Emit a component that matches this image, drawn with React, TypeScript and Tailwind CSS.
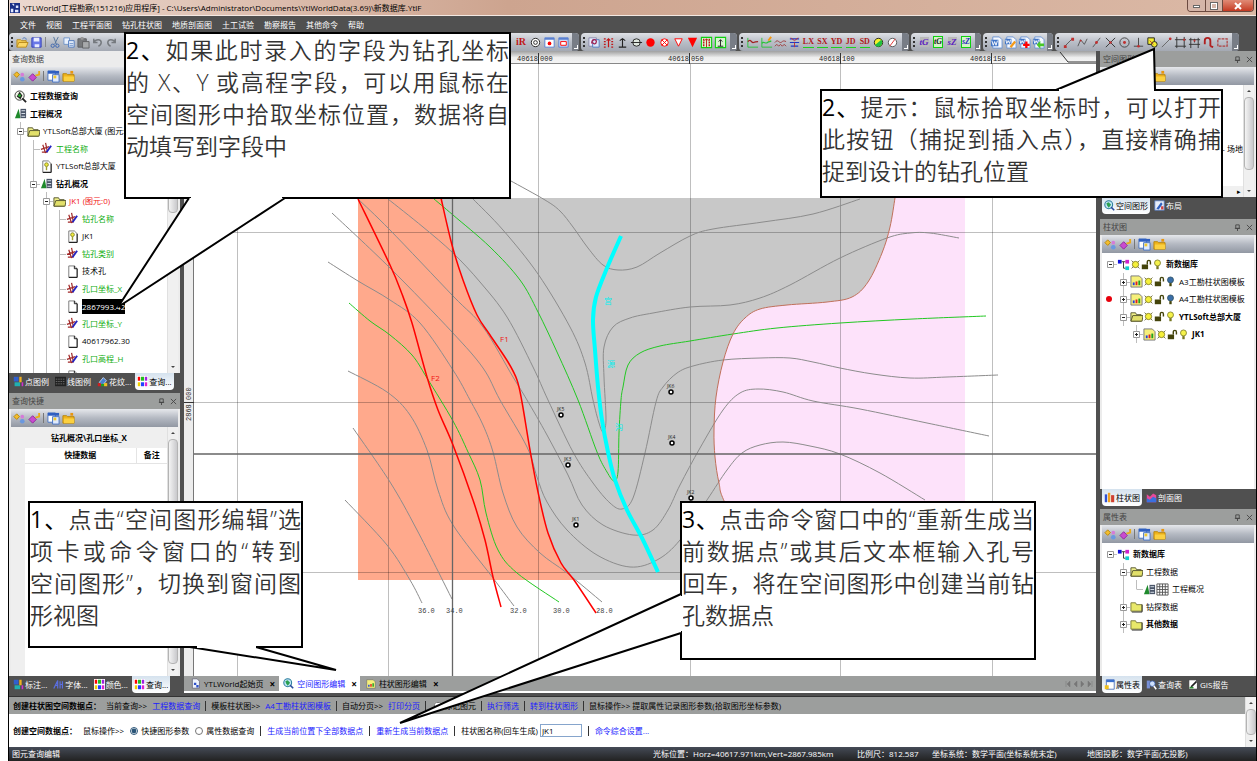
import { ReactNode } from "react";
import clsx from "clsx";

type Pt = [number, number];

// Catmull-Rom spline through the given points
const curve = (pts: Pt[], start = "M") => {
    let d = `${start}${pts[0][0]} ${pts[0][1]}`;
    for (let i = 0; i < pts.length - 1; i++) {
        const a = pts[i - 1] || pts[i];
        const b = pts[i];
        const c = pts[i + 1];
        const e = pts[i + 2] || c;
        d += `C${b[0] + (c[0] - a[0]) / 6} ${b[1] + (c[1] - a[1]) / 6} ${c[0] - (e[0] - b[0]) / 6} ${c[1] - (e[1] - b[1]) / 6} ${c[0]} ${c[1]}`;
    }
    return d;
};

/* ---------- map data ---------- */

const faultTop: Pt[] = [[441, 198], [452, 245], [463, 280], [477, 315], [490, 335], [508, 362], [517, 380], [522, 402], [530, 450], [538, 492], [548, 533], [561, 563], [574, 580]];
const fault1: Pt[] = [...faultTop, [596, 613]];
const fault2: Pt[] = [[358, 199], [390, 265], [402, 294], [412, 323], [427, 377], [438, 410], [453, 445], [473, 500], [485, 540], [493, 577], [501, 607]];
const pinkEdge: Pt[] = [[895, 198], [890, 227], [882, 253], [868, 282], [852, 297], [827, 302], [787, 305], [760, 309], [745, 318], [733, 334], [723, 362], [716, 397], [714, 430], [715, 457], [719, 483], [726, 505], [765, 580]];
const river: Pt[] = [[621, 236], [607, 268], [596, 297], [593, 320], [595, 350], [598, 387], [602, 420], [608, 452], [615, 480], [627, 510], [642, 538], [658, 572]];

const greenLines: Pt[][] = [
    [[434, 199], [453, 215], [490, 247], [520, 280], [538, 312], [557, 352], [578, 400], [597, 452], [607, 472], [614, 481], [618, 472], [619, 433], [621, 400], [623, 387], [628, 365], [640, 353], [660, 346], [690, 341], [733, 334], [777, 328], [840, 323], [913, 319], [986, 316]],
    [[349, 303], [370, 321], [390, 335], [412, 355], [427, 378], [453, 421], [468, 452], [480, 480], [486, 513], [498, 550], [517, 573], [559, 602]],
];

const grayLines: Pt[][] = [
    [[511, 181], [545, 200], [560, 211], [573, 227], [588, 248], [603, 265], [618, 270], [637, 267], [660, 253], [690, 236], [713, 229], [763, 222], [813, 214], [860, 199]],
    [[473, 199], [503, 230], [538, 274], [570, 327], [585, 363], [593, 400], [599, 423], [603, 432], [606, 420], [604, 377], [604, 347], [613, 327], [630, 318], [653, 313], [690, 307], [730, 305], [760, 298], [790, 285], [840, 258], [887, 238], [910, 233], [930, 233], [959, 238]],
    [[388, 199], [423, 227], [453, 253], [480, 282], [507, 317], [533, 367], [548, 400], [573, 452], [593, 483], [610, 503], [622, 509], [633, 498], [645, 453], [656, 402], [663, 387], [677, 373], [693, 366], [723, 360], [760, 358], [790, 358], [813, 362], [840, 368], [873, 374], [910, 378], [947, 377], [998, 375]],
    [[358, 199], [390, 230], [453, 296], [483, 327], [513, 377], [527, 400], [547, 435], [568, 475], [582, 505], [603, 525], [633, 535], [653, 530], [668, 510], [680, 485], [700, 448], [723, 410], [740, 393], [758, 389], [783, 392], [813, 401], [860, 409], [927, 423], [989, 436]],
    [[332, 213], [390, 268], [452, 332], [483, 368], [500, 400], [527, 447], [537, 477], [547, 502], [567, 530], [597, 555], [630, 567], [657, 560], [680, 540], [707, 500], [727, 470], [742, 453], [760, 445], [783, 442], [810, 446], [840, 454], [880, 473], [925, 500]],
    [[328, 262], [358, 281], [390, 300], [420, 323], [453, 370], [470, 400], [483, 425], [493, 452], [503, 493], [517, 527], [540, 553], [567, 573], [602, 602]],
    [[348, 371], [387, 392], [410, 415], [427, 450], [438, 490], [453, 525], [493, 578], [514, 606]],
    [[353, 428], [390, 482], [417, 530], [452, 599]],
    [[345, 500], [387, 545], [410, 580], [422, 603]],
];

const drills: [number, number, string][] = [[671, 392, "JK6"], [561, 415, "JK5"], [672, 443, "JK4"], [568, 465, "JK3"], [691, 498, "JK2"], [576, 525, "JK1"]];
const levels: [number, string][] = [[418, "36.0"], [446, "34.0"], [510, "32.0"], [553, "30.0"], [596, "28.0"]];
const gridX = [237, 388, 538, 690, 840, 992];
const gridY = [232, 402, 572];

/* ---------- icons, all on a 14 x 14 grid ---------- */

const icons: Record<string, ReactNode> = {
    folder: <><path d="M1 12V4h4l1 1h5v2" fill="#f3c94e" stroke="#b98a1c" /><path d="M1 12l2-5h10l-2 5z" fill="#fbd766" stroke="#b98a1c" /><path d="M7 3c2-2 4-1 4 1" fill="none" stroke="#4b74b8" /></>,
    save: <><path d="M2 2h10v10H2z" fill="#6a78e8" stroke="#3440b8" /><path d="M4 2h6v4H4zM5 9h5v3H5z" fill="#e9ecff" /></>,
    cut: <><path d="M5 1l3 8M10 1L6 9" stroke="#56779e" fill="none" /><circle cx="4" cy="10.500" r="1.800" fill="none" stroke="#3d67b1" /><circle cx="9" cy="10.500" r="1.800" fill="none" stroke="#3d67b1" /></>,
    copy: <><path d="M1 2h6v7H1z" fill="#e8f0fc" stroke="#6f93c8" /><path d="M6 5h6v7H6z" fill="#e8f0fc" stroke="#4f7ac0" /><path d="M7 8h4M7 10h4" stroke="#6f93c8" /></>,
    paste: <><path d="M1 3h9v9H1z" fill="#77797c" stroke="#5c5e61" /><path d="M4 1h3v3H4z" fill="#999" /><path d="M6 6h7v7H6z" fill="#a7a9ab" stroke="#606163" /></>,
    undo: <path d="M3 3v4h4M3 7c2-4 8-4 8 0 0 2-1 3-3 4" fill="none" stroke="#75797e" strokeWidth="1.600" />,
    redo: <path d="M11 3v4H7M11 7C9 3 3 3 3 7c0 2 1 3 3 4" fill="none" stroke="#75797e" strokeWidth="1.600" />,
    ring: <><circle cx="7" cy="7" r="4.500" fill="#fff" stroke="#222" /><circle cx="7" cy="7" r="2" fill="none" stroke="#222" /></>,
    winDot: <><path d="M2 2h10v10H2z" fill="#fff" stroke="#5a80d0" /><path d="M2 2h10v2H2z" fill="#5a80d0" /><circle cx="7" cy="8" r="2" fill="red" /></>,
    winBox: <><path d="M2 2h10v10H2z" fill="#cfdcf5" stroke="#5a80d0" /><path d="M2 2h10v2H2z" fill="#5a80d0" /><path d="M4 6h6v4H4z" fill="#fff" stroke="red" /></>,
    pageClip: <><path d="M1 2h8v9H1z" fill="#eef" stroke="#88a" /><path d="M5 4h7v8H5z" fill="#dbe8fa" stroke="#4f7ac0" /><path d="M4 8c0-5 5-5 5-2s-3 3-4 1" fill="none" stroke="#a02050" strokeWidth="1.400" /></>,
    bars: <path d="M2 3h2M2 6h2M2 9h2M2 12h2M10 3h2M10 6h2M10 9h2M10 12h2M7 12V3M5 5l2-2 2 2" fill="none" stroke="#c01818" strokeWidth="1.300" />,
    up: <path d="M7 12V3M4 5l3-2 3 2M3 12h8" fill="none" stroke="#222" strokeWidth="1.200" />,
    circleLine: <><circle cx="7" cy="7" r="4" fill="#dfe8df" stroke="#222" /><path d="M1 7h12" stroke="#222" /></>,
    redDot: <circle cx="7" cy="7" r="4.500" fill="red" />,
    redHatch: <><circle cx="7" cy="7" r="4" fill="#fff" stroke="red" /><path d="M4 4l6 6M10 4l-6 6" stroke="red" /></>,
    triOpen: <path d="M3 3h8L7 11z" fill="#fff" stroke="red" />,
    tri: <path d="M2 2h10L7 12z" fill="red" />,
    barsGreen: <><path d="M1.500 1.500h11v11h-11z" fill="#d8f5d0" stroke="#10d010" strokeWidth="1.200" /><path d="M4 3v9M10 3v9" stroke="#c01818" strokeWidth="1.500" strokeDasharray="2 1" /><path d="M7 12V3M5 5l2-2 2 2" fill="none" stroke="#c01818" /></>,
    upGreen: <><path d="M1.500 1.500h11v11h-11z" fill="#d8f5d0" stroke="#10d010" strokeWidth="1.200" /><path d="M7 11V4M5 6l2-2 2 2M4 11h6" fill="none" stroke="#222" /></>,
    wave: <><path d="M2 2v10h11" fill="none" stroke="#2ac43a" /><path d="M2 6c3-4 4 2 6 1s3-1 5-1" fill="none" stroke="#a02020" strokeWidth="1.400" /></>,
    wavePen: <><path d="M2 2v10h11" fill="none" stroke="#2ac43a" /><path d="M2 8c2-3 4 1 6-1s3 0 4-2" fill="none" stroke="#2ac43a" strokeWidth="1.300" /><path d="M9 5l3-4" stroke="#f59a10" strokeWidth="2" /></>,
    waves: <path d="M1 7c3-4 4 0 6 0s2-3 6-1M1 11l2-2 2 2 2-2 2 2 2-2 2 2" fill="none" stroke="#a03838" />,
    blueBars: <><path d="M2 3h10M2 7h10M3 11h8" stroke="#2038c8" strokeWidth="1.300" /><path d="M3 2l4 3 4-3M7 7v5" stroke="#c03030" fill="none" /></>,
    pie: <><circle cx="7" cy="7" r="4.500" fill="#f7f02c" stroke="#222" /><path d="M3 10a4.500 4.500 0 0 0 7-6z" fill="#20c040" /></>,
    pieOpen: <><circle cx="7" cy="7" r="4.500" fill="#fff" stroke="#555" /><path d="M4 11l6-8" stroke="#e03030" /></>,
    word: <><path d="M3 1h7l3 3v9H3z" fill="#f5f9ff" stroke="#6c95d5" /><path d="M1 4h8v7H1z" fill="#3f74c6" /><path d="M2 5l1.500 5L5 6l1.500 4L8 5" fill="none" stroke="#fff" /></>,
    wordPen: <><path d="M3 1h7l3 3v9H3z" fill="#f5f9ff" stroke="#6c95d5" /><path d="M1 3h7v6H1z" fill="#3f74c6" /><path d="M2 4l1 4 1.500-3L6 8l1-4" fill="none" stroke="#fff" /><path d="M7 12l5-6" stroke="#f39a19" strokeWidth="2.500" /></>,
    wordRed: <><path d="M3 1h7l3 3v9H3z" fill="#f5f9ff" stroke="#6c95d5" /><path d="M1 3h7v6H1z" fill="#3f74c6" /><path d="M2 4l1 4 1.500-3L6 8l1-4" fill="none" stroke="#fff" /><path d="M9 6v7M5.500 9.500h7" stroke="red" strokeWidth="2.500" /></>,
    wordGreen: <><path d="M3 1h7l3 3v9H3z" fill="#f5f9ff" stroke="#6c95d5" /><path d="M1 3h7v6H1z" fill="#3f74c6" /><path d="M2 4l1 4 1.500-3L6 8l1-4" fill="none" stroke="#fff" /><path d="M9 5v3h4v3H9v3L5 9.500z" fill="#48c828" /></>,
    line: <><path d="M3 11l8-8" stroke="#555" /><path d="M2 10h3v3H2zM10 2h3v3h-3z" fill="#c03030" /></>,
    zig: <><path d="M2 11l3-7 4 5 3-6" fill="none" stroke="#555" /><circle cx="5" cy="5" r="1" fill="#c03030" /></>,
    slash: <><path d="M3 12l8-10" stroke="#555" /><circle cx="7" cy="7" r="1.500" fill="#c03030" /></>,
    cross: <><path d="M2 2l10 10M12 2L2 12" stroke="#333" /><circle cx="7" cy="7" r="1.300" fill="#c03030" /></>,
    target: <><circle cx="7" cy="7" r="5" fill="none" stroke="#444" /><circle cx="7" cy="7" r="1.600" fill="#c03030" /></>,
    perp: <><path d="M2 11h10M7 2v9" stroke="#444" /><circle cx="7" cy="11" r="1.400" fill="#c03030" /></>,
    insert: <><path d="M2 2h7v7H2z" fill="#f2ee30" stroke="#222" /><circle cx="9" cy="9" r="3" fill="#f2ee30" stroke="#222" /><path d="M4 5l4 4" stroke="#c03030" /></>,
    tangent: <><path d="M2 12L11 3" stroke="#666" /><circle cx="11" cy="3" r="1.500" fill="#c03030" /></>,
    frame: <><path d="M3 1v12M11 1v12M1 4h12M1 11h12" stroke="#333" /><path d="M10 3h2v2h-2z" fill="#c03030" /></>,
    frameUp: <><path d="M3 2v11M11 2v11M1 4h12M7 3v4M1 9h12" stroke="#333" /><path d="M6 4h2v2H6z" fill="#c03030" /></>,
    magnet: <path d="M3 9V5c0-4 6-4 6 0v6M9 11l3 1" fill="none" stroke="#b02020" strokeWidth="2" />,
    region: <path d="M2 3h10v8H2z" fill="none" stroke="#b04040" strokeDasharray="3 1" strokeWidth="1.300" />,
    gems: <><path d="M4 2l3 3-3 3-3-3z" fill="#f3bd2c" stroke="#b8860b" /><circle cx="10" cy="5" r="2" fill="#d57bd8" /><circle cx="10" cy="10" r="2.500" fill="#6a98e0" /></>,
    gemArrow: <><path d="M5 4l4 4-4 4-4-4z" fill="#c94bd0" stroke="#8e2c98" /><path d="M8 6l4-1V1" fill="none" stroke="#e8ab1a" strokeWidth="2" /></>,
    props: <><path d="M1 1h8v10H1z" fill="#fff" stroke="#4572c4" /><path d="M1 1h12v3H1z" fill="#2f5fc0" /><path d="M6 5h7v8H6z" fill="#dfeafc" stroke="#4572c4" /><path d="M7 6h3v3H7z" fill="#f0c930" /></>,
    folderNew: <><path d="M1 4h4l1 1h7v7H1z" fill="#f0b41c" stroke="#b8860b" /><path d="M2 7h11v5H2z" fill="#fbd040" /><path d="M9 1h3v3H9z" fill="#e89610" /></>,
    search: <><circle cx="6" cy="6" r="5" fill="#f0f5e8" stroke="#333" /><path d="M6 2l3 4-2 4-4-3z" fill="#222" /><circle cx="6" cy="6" r="1.500" fill="#25b02c" /><path d="M9 9l4 4" stroke="#222" strokeWidth="2" /></>,
    tree: <><path d="M5 2L1 12h6z" fill="#1f8a2c" /><path d="M7 2h6v10H7z" fill="#4a5568" /><path d="M8 4h4M8 7h4M8 10h4" stroke="#dfe6f0" /></>,
    folderOpen: <><path d="M1 12V3h5l1 2h5v7z" fill="#f0f08a" stroke="#555530" /><path d="M1 12l2-6h11l-1 6z" fill="#e2e06a" stroke="#555530" /></>,
    folderShut: <><path d="M1 12V3h5l1 2h6v7z" fill="#e8e86a" stroke="#77773a" /><path d="M13 5v8H2" stroke="#333" fill="none" /></>,
    pencil: <><path d="M3 3l3 9M6 1l2 10M1 8l9-3M2 11l6 0" stroke="#a02828" strokeWidth="1.300" fill="none" /><path d="M7 11l5-7" stroke="#2424c0" strokeWidth="2" /></>,
    page: <><path d="M3 1h6l3 3v9H3z" fill="#fff" stroke="#777" /><path d="M12 4v9.500H3M9 1v3h3" fill="none" stroke="#111" /></>,
    pageKey: <><path d="M3 1h6l3 3v9H3z" fill="#fff" stroke="#777" /><path d="M12 4v9.500H3" fill="none" stroke="#111" /><circle cx="7" cy="5" r="2" fill="#f0ea3a" stroke="#888830" /><path d="M7 7v4" stroke="#a0a030" strokeWidth="1.500" /></>,
    db: <><path d="M1 2h4v4H1z" fill="#1010e0" /><path d="M9 2h4v4H9z" fill="#d020d0" /><path d="M9 9h4v4H9z" fill="#10d0d0" /><path d="M5 4h4M7 4v7h2" stroke="#333" fill="none" /></>,
    sheet: <><path d="M1 1h9l3 3v9H1z" fill="#f6f07a" stroke="#777" /><path d="M4 11V8" stroke="#2040e0" strokeWidth="2" /><path d="M7 11V7" stroke="#e02020" strokeWidth="2" /><path d="M10 11V6" stroke="#20a020" strokeWidth="2" /></>,
    sun: <><path d="M2 2l10 10M12 2L2 12" stroke="#555520" /><circle cx="7" cy="7" r="4" fill="#f5f03a" stroke="#77701a" /></>,
    lock: <><path d="M1 7h8v6H1z" fill="#44440c" /><path d="M8 7V4c0-3 4-3 4 0v3" fill="none" stroke="#44440c" strokeWidth="1.800" /></>,
    bulb: <><circle cx="7" cy="5" r="3.800" fill="#f5f24a" stroke="#777722" /><path d="M5.500 9h3v4h-3z" fill="#777722" /></>,
    bulbBlue: <><circle cx="7" cy="5" r="3.800" fill="#3a6ea8" stroke="#2c4f60" /><path d="M5.500 9h3v4h-3z" fill="#44440c" /></>,
    grid: <path d="M1 1h12v12H1zM4 1v12M7 1v12M10 1v12M1 4h12M1 7h12M1 10h12" fill="#fff" stroke="#555" />,
    blocks: <><path d="M1 1h6v6H1z" fill="#3060d0" /><path d="M2 8h7v5H2z" fill="#20b0b0" /><path d="M8 1h3v7H8z" fill="#f0b020" /><path d="M11 8h2v5h-2z" fill="#d030d0" /></>,
    lines: <><path d="M0 1h14v12H0z" fill="#222" /><path d="M1 4h12M1 7h12M1 10h12" stroke="#777" strokeDasharray="2 1" /></>,
    pattern: <><path d="M3 8l5-6 4 4-5 6z" fill="#4a80d0" stroke="#d8e6f8" /><path d="M1 9h4v4H1z" fill="#d02020" /><path d="M5 10h4v3H5z" fill="#20a020" /><path d="M9 9h4v4H9z" fill="#f0c020" /></>,
    palette: <><path d="M0 0h14v14H0z" fill="#fff" /><path d="M1 1h3v5H1z" fill="red" /><path d="M5 1h4v5H5z" fill="#20c020" /><path d="M10 1h3v5h-3z" fill="#a020e0" /><path d="M1 8h3v5H1z" fill="#f0d000" /><path d="M5 8h4v5H5z" fill="#2040ff" /><path d="M10 8h3v5h-3z" fill="#e020d0" /></>,
    fontA: <path d="M1 12L6 2v10M3 8h3M9 3v9M12 3v9M9 7h3" fill="none" stroke="#5a6ee0" strokeWidth="1.500" />,
    globe: <><circle cx="6" cy="6" r="5" fill="#bfe4f5" stroke="#2a7c9c" strokeWidth="1.300" /><path d="M3 4l3-1 3 3-3 4-2-3z" fill="#2ba050" /><path d="M9 9l4 4" stroke="#2a4c9c" strokeWidth="2" /></>,
    layout: <><path d="M1 1h12v12H1z" fill="#e8eefa" stroke="#5278c0" /><path d="M3 11l6-8 2 2-5 7z" fill="#3060c0" /><path d="M9 8h3v4H9z" fill="#d04040" /></>,
    start: <><path d="M3 1h6l3 3v9H3z" fill="#eef3fb" stroke="#667" /><path d="M5 6h3v3H5zM8 9h3v3H8z" fill="#2e50c8" /></>,
    columns: <><path d="M1 3h3v10H1z" fill="#3050d0" /><path d="M5 1h3v12H5z" fill="#f0a020" /><path d="M9 4h4v9H9z" fill="#d04030" /></>,
    section: <><path d="M1 3l4 3 4-4 4 2v9H1z" fill="#e84a9a" /><path d="M1 8l4 2 4-4 4 2v5H1z" fill="#3a70e0" /></>,
    table: <><path d="M3 1h10v12H3z" fill="#fff" stroke="#3a60b0" /><path d="M3 1h10v3H3z" fill="#3a70d0" /><path d="M1 8h5v5H1z" fill="#f0c020" /></>,
    query: <><path d="M1 2h4v10H1z" fill="#7890d8" /><circle cx="8" cy="6" r="3.500" fill="#cfe0fa" stroke="#3a60b0" /><path d="M10 9l3 4" stroke="#fff" strokeWidth="2" /></>,
    gis: <><path d="M1 1h9l2 2v10H1z" fill="#fff" stroke="#333" /><path d="M4 10l7-7" stroke="#222" strokeWidth="2" /><path d="M2 10h5v2H2z" fill="#2a9030" /></>,
};

const Icon = ({ name, className = "size-[13px]" }: { name: string; className?: string }) => (
    <svg viewBox="0 0 14 14" className={clsx("shrink-0", className)} aria-hidden="true">{icons[name]}</svg>
);

/* ---------- toolbars ---------- */

const letterIcons: Record<string, string> = {
    LX: "text-[#b01818] border-b border-[#1ed01e] text-[8px]",
    SX: "text-[#b01818] border-b border-[#1ed01e] text-[8px]",
    YD: "text-[#b01818] border-b border-[#1ed01e] text-[8px]",
    JD: "text-[#b01818] border-b border-[#1ed01e] text-[8px]",
    SD: "text-[#b01818] border-b border-[#1ed01e] text-[8px]",
    tG: "text-[#5a20c0] italic bg-[#b9b9b9] text-[9px]",
    tGg: "text-[#202020] italic border border-[#10d010] bg-[#d3f3c8] text-[8px]",
    sZ: "text-[#5a20c0] italic bg-[#b9b9b9] text-[9px]",
    sZg: "text-[#2a2ac0] italic border border-[#10d010] bg-[#d3f3c8] text-[8px]",
    iR: "text-[#c01818] text-[10px]",
};

const ToolButton = ({ name }: { name: string }) => (
    <button type="button" aria-label={name} className="flex items-center justify-center w-[14px] h-[16px]">
        {letterIcons[name] ? (
            <span className={clsx("font-['Liberation_Serif'] font-bold leading-[10px]", letterIcons[name])}>{name.slice(0, 2)}</span>
        ) : (
            <Icon name={name} />
        )}
    </button>
);

const Strip = ({ className, children }: { className: string; children: ReactNode }) => (
    <div className={clsx("flex items-center h-[18px] rounded-sm overflow-hidden bg-linear-to-b from-[#dfe1e6] via-[#b9bec7] to-[#a4a9b3]", className)}>
        <span className="w-[2px] h-[10px] ml-[2px] mr-[2px] border-l-2 border-dotted border-[#333]" />
        <div className="flex flex-1 items-center justify-between">{children}</div>
        <span className="ml-[2px] w-[7px] h-full bg-[#787d86] flex items-end justify-center">
            <span className="size-[4px] mb-[2px] border-r border-b border-white" />
        </span>
    </div>
);

const group = (names: string[]) => names.map((n) => <ToolButton key={n} name={n} />);

const PanelTools = () => (
    <div className="mx-[2px] h-[18px] flex items-center gap-[1px] pl-[1px] bg-linear-to-b from-[#e6e8ec] via-[#b4b9c2] to-[#9298a3]">
        {group(["gems", "gemArrow"])}
        <span className="w-px h-[10px] mx-px bg-[#777]" />
        {group(["props", "folderNew"])}
    </div>
);

const PanelHeader = ({ title, light }: { title: string; light?: boolean }) => (
    <div className={clsx("h-[16px] flex items-center justify-between px-[3px] text-[#444]", light ? "bg-[#ececec]" : "bg-[#9c9e9d]")}>
        <span>{title}</span>
        <span className="flex gap-[5px] items-center">
            <button type="button" aria-label="固定" className="flex">
                <svg viewBox="0 0 8 8" className="size-[7px]"><path d="M2 1h4v4H2zM1 5h6M4 5v3" fill="none" stroke="#444" /></svg>
            </button>
            <button type="button" aria-label="关闭" className="flex">
                <svg viewBox="0 0 8 8" className="size-[7px]"><path d="M1 1l6 6M7 1L1 7" stroke="#444" /></svg>
            </button>
        </span>
    </div>
);

/* ---------- scroll bar, tabs ---------- */

const ScrollBar = ({ thumb }: { thumb: string }) => (
    <div className="w-[11px] shrink-0 flex flex-col items-center bg-[#f0f0f0] border-l border-[#e0e0e0]">
        <svg viewBox="0 0 10 12" className="w-[10px] h-[12px] shrink-0"><path d="M3 7l2-2 2 2z" fill="#444" /></svg>
        <div className="flex-1 w-full flex flex-col">
            <div className={clsx("w-full rounded-sm border border-[#b4b4b4] bg-linear-to-r from-[#f4f4f4] to-[#c9c9cc]", thumb)} />
        </div>
        <svg viewBox="0 0 10 12" className="w-[10px] h-[12px] shrink-0"><path d="M3 5l2 2 2-2z" fill="#444" /></svg>
    </div>
);

type TabItem = { icon: string; label: string; active?: boolean };

const TabBar = ({ tabs }: { tabs: TabItem[] }) => (
    <div className="flex items-start h-[20px] pl-[2px] gap-[2px]">
        {tabs.map((t) => (
            <button
                type="button"
                key={t.label}
                className={clsx(
                    "h-[17px] flex items-center gap-[1px] px-[2px] rounded-b-sm whitespace-nowrap",
                    t.active ? "bg-linear-to-b from-[#d5e2ee] to-white text-black" : "text-white"
                )}
            >
                <Icon name={t.icon} className="size-[11px]" />
                {t.label}
            </button>
        ))}
    </div>
);

/* ---------- tree ---------- */

// one character per indent column: space, | line, t branch, l last branch, r root node, - open node, + closed node
type RowData = { cells: string; icons: string[]; text?: string; color?: string; bold?: boolean; selected?: boolean; dot?: boolean };

const Cell = ({ kind }: { kind: string }) => (
    <svg viewBox="0 0 13 18" className="w-[13px] h-[18px] shrink-0" aria-hidden="true">
        <g stroke="#bdbdbd" fill="none">
            {"|t".includes(kind) && <path d="M6.500 0v18" />}
            {kind === "l" && <path d="M6.500 0v9" />}
            {"tl".includes(kind) && <path d="M6.500 9.500h7" />}
            {"+-".includes(kind) && <path d="M6.500 0v18M9 9.500h4" />}
            {kind === "r" && <path d="M9 9.500h4" />}
        </g>
        {"+-r".includes(kind) && (
            <>
                <path d="M3.500 6.500h6v6h-6z" fill="#fff" stroke="#999" />
                <path d={kind === "+" ? "M5 9.500h3M6.500 8v3" : "M5 9.500h3"} stroke="#222" />
            </>
        )}
    </svg>
);

const Tree = ({ rows }: { rows: RowData[] }) => (
    <ul className="flex-1 min-w-0 overflow-hidden pt-[2px]">
        {rows.map((r, i) => (
            <li key={i} className="relative flex items-center odd:h-[18px] even:h-[17px] whitespace-nowrap">
                {r.dot && <span className="absolute left-[2px] size-[6px] rounded-full bg-red-600" />}
                {r.cells.split("").map((c, j) => <Cell key={j} kind={c} />)}
                {r.icons.map((n) => (
                    <Icon key={n} name={n} className={["sun", "lock", "bulb", "bulbBlue"].includes(n) ? "w-[11px] h-[11px]" : "size-[13px]"} />
                ))}
                <span className={clsx("ml-[3px]", r.color, r.bold && "font-bold", r.selected && "bg-black text-white leading-[15px]")}>{r.text}</span>
            </li>
        ))}
    </ul>
);

const green = "text-[#0fae0f]";

const dataRows: RowData[] = [
    { cells: "", icons: ["search"], text: "工程数据查询", bold: true },
    { cells: "", icons: ["tree"], text: "工程概况", bold: true },
    { cells: "-", icons: ["folderOpen"], text: "YTLSoft总部大厦 (图元:0)" },
    { cells: "|t", icons: ["pencil"], text: "工程名称", color: green },
    { cells: "||", icons: ["pageKey"], text: "YTLSoft总部大厦" },
    { cells: "|-", icons: ["tree"], text: "钻孔概况", bold: true },
    { cells: "||-", icons: ["folderOpen"], text: "JK1 (图元:0)", color: "text-[#f01414]" },
    { cells: "|||t", icons: ["pencil"], text: "钻孔名称", color: green },
    { cells: "||||", icons: ["pageKey"], text: "JK1" },
    { cells: "|||t", icons: ["pencil"], text: "钻孔类别", color: green },
    { cells: "||||", icons: ["page"], text: "技术孔" },
    { cells: "|||t", icons: ["pencil"], text: "孔口坐标_X", color: green },
    { cells: "||||", icons: ["page"], text: "2867993.42", selected: true },
    { cells: "|||t", icons: ["pencil"], text: "孔口坐标_Y", color: green },
    { cells: "||||", icons: ["page"], text: "40617962.30" },
    { cells: "|||t", icons: ["pencil"], text: "孔口高程_H", color: green },
    { cells: "||||", icons: ["page"] },
];

const columnRows: RowData[] = [
    { cells: "r", icons: ["db", "sun", "lock", "bulb"], text: "新数据库", bold: true },
    { cells: " +", icons: ["sheet", "sun", "lock", "bulbBlue"], text: "A3工勘柱状图模板" },
    { cells: " +", icons: ["sheet", "sun", "lock", "bulbBlue"], text: "A4工勘柱状图模板", dot: true },
    { cells: " -", icons: ["folderOpen", "sun", "lock", "bulb"], text: "YTLSoft总部大厦", bold: true },
    { cells: "  +", icons: ["sheet", "sun", "lock", "bulb"], text: "JK1", bold: true },
];

const propRows: RowData[] = [
    { cells: "r", icons: ["db"], text: "新数据库", bold: true },
    { cells: " -", icons: ["folderOpen"], text: "工程数据" },
    { cells: " |l", icons: ["tree", "grid"], text: "工程概况" },
    { cells: " +", icons: ["folderShut"], text: "钻探数据" },
    { cells: " +", icons: ["folderShut"], text: "其他数据", bold: true },
];

/* ---------- drawing area ---------- */

const MapView = () => (
    <svg className="flex-1 min-w-0 h-full bg-white" role="img" aria-label="空间图形">
        <g transform="translate(-194 -64)" fill="none">
            <path d="M358 198H965V580H358z" fill="#c8c8c8" />
            <path d={`${curve(faultTop)}L358 580V198z`} fill="#ffa98c" />
            <path d={`${curve(pinkEdge)}H965V198z`} fill="#fde2fa" />
            <g stroke="#000" strokeOpacity="0.250">
                {gridX.map((x) => <path key={x} d={`M${x}.5 64V2000`} />)}
                {gridY.map((y) => <path key={y} d={`M194 ${y}.5H3000`} />)}
            </g>
            <g stroke="#8c8c8c" strokeWidth="1">
                {grayLines.map((l, i) => <path key={i} d={curve(l)} />)}
            </g>
            <g stroke="#22c822">
                {greenLines.map((l, i) => <path key={i} d={curve(l)} />)}
            </g>
            <path d={curve(pinkEdge)} stroke="#c0705a" />
            <path d="M452.500 64V2000M194 454H3000" stroke="#666" strokeWidth="1.300" />
            <path d={curve(fault1)} stroke="#f00" strokeWidth="1.500" />
            <path d={curve(fault2)} stroke="#f00" strokeWidth="1.500" />
            <path d={curve(river)} stroke="#0ff" strokeWidth="4" />
            <g fontSize="8" fill="#f01414">
                <text x="500" y="342">F1</text>
                <text x="431" y="381">F2</text>
            </g>
            <g fontSize="8" fill="#0ee">
                <text x="604" y="304">宫</text>
                <text x="607" y="367">源</text>
                <text x="615" y="430">沟</text>
            </g>
            {drills.map(([x, y, name]) => (
                <g key={name}>
                    <circle cx={x} cy={y} r="2" fill="#fff" stroke="#000" strokeWidth="1.500" />
                    <text x={x - 4} y={y - 4} fontSize="5" fill="#222">{name}</text>
                </g>
            ))}
            <g fontSize="7" fill="#444" className="font-['Liberation_Mono']">
                {levels.map(([x, t]) => <text key={t} x={x} y="613">{t}</text>)}
            </g>
        </g>
    </svg>
);

const TopRuler = () => (
    <svg className="w-full h-[13px] shrink-0 bg-linear-to-b from-[#a0a0a0] via-[#eee] to-[#f6f6f6]" aria-hidden="true">
        <g transform="translate(-184 -51)">
            <path d="M184 63.500H3000" stroke="#888" />
            <path d="M1060 52l8 10h28" fill="none" stroke="#333" />
            {["000", "050", "100", "150"].map((t, i) => (
                <g key={t} fontSize="7" fill="#222" className="font-['Liberation_Mono']">
                    <text x={517 + i * 151} y="61">40618</text>
                    <path d={`M${538 + i * 151}.5 53v11`} stroke="#333" />
                    <text x={540 + i * 151} y="61">{t}</text>
                </g>
            ))}
        </g>
    </svg>
);

const SideRuler = () => (
    <svg className="w-[10px] h-full shrink-0 bg-[#ececec]" aria-hidden="true">
        <path d="M9.500 0V2000" stroke="#777" />
        <path d="M0 338.500h10" stroke="#333" />
        <text fontSize="7" fill="#222" className="font-['Liberation_Mono']" transform="translate(7 357) rotate(-90)">2868 000</text>
    </svg>
);

/* ---------- callouts ---------- */

const Callout = ({ className, num, lines }: { className: string; num: string; lines: string[] }) => (
    <div className={clsx("absolute bg-white border-2 border-black text-[#333] text-[23px] leading-8 font-[350] whitespace-nowrap", className)}>
        {lines.map((l, i) => (
            <p key={l} className={i < lines.length - 1 ? "text-justify [text-align-last:justify]" : ""}>
                {i === 0 && <span className="text-black font-normal">{num}</span>}
                {l}
            </p>
        ))}
    </div>
);

const Bar = () => <span className="w-px h-[10px] bg-[#333]" />;
const Cmd = ({ children }: { children: ReactNode }) => <a href="#" className="text-[#1a1aff]">{children}</a>;

const App = () => {
    return (
        <div className="relative min-h-screen flex flex-col pl-[8px] overflow-hidden bg-white font-['Open_Sans','Noto_Sans_CJK_SC',sans-serif] text-[8px] leading-[12px] text-black">
            <div className="flex-1 flex flex-col border-x border-black bg-[#505050]">
                <header>
                    <div className="h-[16px] flex items-center pl-px bg-linear-to-r from-[#ecd9d0] via-[#cda48f] via-40% to-[#dbb9a6] border-b border-[#f3e8e2]">
                        <svg viewBox="0 0 12 12" className="size-[10px] mr-[3px]"><path d="M0 0h12v12H0z" fill="#1b2f86" /><path d="M2 1l3 3V1zM7 3h3v3H7zM1 7h3v4H1zM6 8h4v3H6z" fill="#dfe6ff" /></svg>
                        <h1>YTLWorld[工程勘察(151216)应用程序] - C:\Users\Administrator\Documents\YtlWorldData(3.69)\新数据库.YtlF</h1>
                        <div className="ml-auto self-start mr-[2px] flex h-[12px] rounded-b-sm overflow-hidden border border-t-0 border-[#6b4a40]">
                            <button type="button" aria-label="最小化" className="w-[18px] flex items-center justify-center bg-[#d5b5a8] border-r border-[#6b4a40]"><span className="w-[7px] h-[3px] mt-[2px] bg-white border border-[#666]" /></button>
                            <button type="button" aria-label="还原" className="w-[17px] flex items-center justify-center bg-[#d5b5a8] border-r border-[#6b4a40]"><span className="size-[6px] border border-white outline outline-[#666]" /></button>
                            <button type="button" aria-label="关闭窗口" className="w-[30px] flex items-center justify-center bg-linear-to-b from-[#e08a75] to-[#c43820]">
                                <svg viewBox="0 0 8 8" className="size-[8px]"><path d="M1 1l6 6M7 1L1 7" stroke="#fff" strokeWidth="2" /></svg>
                            </button>
                        </div>
                    </div>
                    <nav className="h-[17px] flex items-center gap-[10px] pl-[11px] text-white">
                        {["文件", "视图", "工程平面图", "钻孔柱状图", "地质剖面图", "土工试验", "勘察报告", "其他命令", "帮助"].map((m) => (
                            <button type="button" key={m}>{m}</button>
                        ))}
                    </nav>
                    <div className="flex gap-[2px] h-[18px]">
                        <Strip className="w-[570px]">
                            <div className="flex items-center">
                                {group(["folder", "save"])}
                                <span className="w-px h-[10px] mx-[2px] bg-[#888]" />
                                {group(["cut", "copy", "paste", "undo", "redo"])}
                            </div>
                            <div className="flex items-center">{group(["iR", "ring", "winDot", "winBox"])}</div>
                        </Strip>
                        <Strip className="w-[156px]">{group(["pageClip", "bars", "up", "circleLine", "redDot", "redHatch", "triOpen", "tri", "barsGreen", "upGreen"])}</Strip>
                        <Strip className="w-[170px]">{group(["wave", "wavePen", "waves", "blueBars", "LX", "SX", "YD", "JD", "SD", "pie", "pieOpen"])}</Strip>
                        <Strip className="w-[70px]">{group(["tG", "tGg", "sZ", "sZg"])}</Strip>
                        <Strip className="w-[70px]">{group(["word", "wordPen", "wordRed", "wordGreen"])}</Strip>
                        <Strip className="w-[184px]">{group(["line", "zig", "slash", "cross", "target", "perp", "insert", "tangent", "frame", "frameUp", "magnet", "region"])}</Strip>
                    </div>
                </header>

                <main className="flex-1 flex">
                    {/* left panels */}
                    <aside className="w-[171px] shrink-0 flex flex-col">
                        <section className="flex flex-col h-[322px] bg-[#ececec]">
                            <PanelHeader title="查询数据" light />
                            <PanelTools />
                            <div className="flex-1 flex overflow-hidden mx-[2px] bg-white pl-[3px]">
                                <Tree rows={dataRows} />
                                <ScrollBar thumb="h-[116px]" />
                            </div>
                        </section>
                        <TabBar tabs={[{ icon: "blocks", label: "点图例" }, { icon: "lines", label: "线图例" }, { icon: "pattern", label: "花纹..." }, { icon: "palette", label: "查询...", active: true }]} />
                        <section className="flex-1 flex flex-col bg-[#ececec]">
                            <PanelHeader title="查询快捷" />
                            <PanelTools />
                            <div className="flex-1 flex mx-[2px]">
                                <div className="flex-1 flex flex-col bg-[#efefef]">
                                    <p className="h-[21px] leading-[21px] font-bold text-center">钻孔概况\孔口坐标_X</p>
                                    <div className="flex-1 ml-[14px] bg-white">
                                        <table className="w-full">
                                            <thead>
                                                <tr className="h-[15px] border-b border-[#e4e4e4]">
                                                    <th className="border-r border-[#e4e4e4]">快捷数据</th>
                                                    <th className="w-[31px]">备注</th>
                                                </tr>
                                            </thead>
                                        </table>
                                    </div>
                                </div>
                                <ScrollBar thumb="flex-1" />
                            </div>
                        </section>
                        <TabBar tabs={[{ icon: "blocks", label: "标注..." }, { icon: "fontA", label: "字体..." }, { icon: "palette", label: "颜色..." }, { icon: "palette", label: "查询...", active: true }]} />
                    </aside>

                    {/* drawing */}
                    <section className="flex-1 min-w-0 flex flex-col ml-[4px]">
                        <TopRuler />
                        <div className="flex-1 flex">
                            <SideRuler />
                            <MapView />
                        </div>
                        <div className="h-[17px] mb-[3px] flex items-stretch bg-[#9c9e9d] border-b-2 border-white">
                            <button type="button" className="flex items-center gap-[3px] pl-[6px] pr-[4px] border-r border-white"><Icon name="start" className="size-[11px]" />YTLWorld起始页<b className="text-[10px] ml-[3px]">×</b></button>
                            <button type="button" className="flex items-center gap-[3px] px-[3px] bg-white text-[#1a1aff]"><Icon name="globe" className="size-[11px]" />空间图形编辑<b className="text-[10px] ml-[3px] text-black">×</b></button>
                            <button type="button" className="flex items-center gap-[3px] px-[6px]"><Icon name="sheet" className="size-[10px]" />柱状图形编辑<b className="text-[10px] ml-[3px]">×</b></button>
                            <svg viewBox="0 0 28 8" className="ml-auto mr-[3px] self-center w-[28px] h-[8px]" aria-hidden="true">
                                <path d="M1 1v6M5 1v6L2 4zM12 1v6L9 4zM16 1v6l3-3zM23 1v6l3-3zM27 1v6" fill="#777" stroke="#777" strokeWidth="0.500" />
                            </svg>
                        </div>
                    </section>

                    {/* right panels */}
                    <aside className="w-[156px] shrink-0 ml-[4px] flex flex-col">
                        <section className="flex flex-col h-[146px] bg-[#ececec]">
                            <PanelHeader title="空间图形" />
                            <PanelTools />
                            <div className="flex-1 flex mx-[2px] bg-white">
                                <div className="flex-1 flex flex-col">
                                    <p className="flex-1 flex items-center justify-end pt-[26px]">- 场地</p>
                                    <div className="h-[11px] bg-[#f0f0f0] text-right text-[7px] leading-[11px] pr-[2px]">▸</div>
                                </div>
                                <ScrollBar thumb="h-[73px]" />
                            </div>
                        </section>
                        <TabBar tabs={[{ icon: "globe", label: "空间图形", active: true }, { icon: "layout", label: "布局" }]} />
                        <section className="flex flex-col h-[270px] bg-[#ececec] mt-[2px]">
                            <PanelHeader title="柱状图" />
                            <PanelTools />
                            <div className="flex-1 mx-[2px] bg-white pl-[2px]"><Tree rows={columnRows} /></div>
                        </section>
                        <TabBar tabs={[{ icon: "columns", label: "柱状图", active: true }, { icon: "section", label: "剖面图" }]} />
                        <section className="flex-1 flex flex-col bg-[#ececec]">
                            <PanelHeader title="属性表" />
                            <PanelTools />
                            <div className="flex-1 mx-[2px] bg-white pl-[2px]"><Tree rows={propRows} /></div>
                        </section>
                        <TabBar tabs={[{ icon: "table", label: "属性表", active: true }, { icon: "query", label: "查询表" }, { icon: "gis", label: "GIS报告" }]} />
                    </aside>
                </main>

                {/* command panel */}
                <section className="flex h-[51px] border-t border-[#333] bg-white">
                    <div className="flex-1 flex flex-col whitespace-nowrap">
                        <div className="h-[17px] flex items-center gap-[5px] pl-[4px] bg-[#9c9e9d]">
                            <b>创建柱状图空间数据点：</b>
                            <span>当前查询&gt;&gt;</span><Cmd>工程数据查询</Cmd><Bar />
                            <span>模板柱状图&gt;&gt;</span><Cmd>A4工勘柱状图模板</Cmd><Bar />
                            <span>自动分页&gt;&gt;</span><Cmd>打印分页</Cmd><Bar />
                            <label className="flex items-center gap-[2px] ml-[3px]"><input type="checkbox" className="size-[8px]" />标记图元</label><Bar />
                            <Cmd>执行筛选</Cmd><Bar />
                            <Cmd>转到柱状图形</Cmd><Bar />
                            <span>鼠标操作&gt;&gt; 提取属性记录图形参数(拾取图形坐标参数)</span>
                        </div>
                        <div className="flex-1 flex items-center gap-[6px] pl-[4px]">
                            <b>创建空间数据点：</b>
                            <span>鼠标操作&gt;&gt;</span>
                            <label className="flex items-center gap-[3px]"><input type="radio" name="mode" defaultChecked className="size-[8px] accent-[#2a5578]" />快捷图形参数</label>
                            <label className="flex items-center gap-[3px]"><input type="radio" name="mode" className="size-[8px]" />属性数据查询</label><Bar />
                            <Cmd>生成当前位置下全部数据点</Cmd><Bar />
                            <Cmd>重新生成当前数据点</Cmd><Bar />
                            <label className="flex items-center gap-[2px]">柱状图名称(回车生成)<input type="text" defaultValue="JK1" className="w-[42px] h-[13px] px-px bg-white border border-[#86a5cc]" /></label><Bar />
                            <Cmd>命令综合设置...</Cmd>
                        </div>
                    </div>
                    <ScrollBar thumb="flex-1" />
                </section>

                <footer className="h-[14px] flex items-center pl-[3px] text-white whitespace-nowrap bg-linear-to-b from-[#454b57] to-[#222]">
                    <span className="w-[641px]">图元查询编辑</span>
                    <span className="w-[204px]">光标位置：Horz=40617.971km,Vert=2867.985km</span>
                    <span className="w-[75px]">比例尺：812.587</span>
                    <span className="w-[155px]">坐标系统：数学平面(坐标系统未定)</span>
                    <span>地图投影：数学平面(无投影)</span>
                </footer>
            </div>

            <Callout className="left-[124px] top-[32px] w-[387px] h-[167px]" num="2、" lines={["如果此时录入的字段为钻孔坐标", "的 X、Y 或高程字段，可以用鼠标在", "空间图形中拾取坐标位置，数据将自", "动填写到字段中"]} />
            <Callout className="left-[820px] top-[89px] w-[403px] h-[109px]" num="2、" lines={["提示：鼠标拾取坐标时，可以打开", "此按钮（捕捉到插入点），直接精确捕", "捉到设计的钻孔位置"]} />
            <Callout className="left-[28px] top-[501px] w-[275px] h-[147px]" num="1、" lines={["点击“空间图形编辑”选", "项卡或命令窗口的“转到", "空间图形”，切换到窗间图", "形视图"]} />
            <Callout className="left-[680px] top-[501px] w-[356px] h-[159px]" num="3、" lines={["点击命令窗口中的“重新生成当", "前数据点”或其后文本框输入孔号", "回车，将在空间图形中创建当前钻", "孔数据点"]} />
            <svg className="absolute left-0 top-0 w-full h-full pointer-events-none" aria-hidden="true">
                <g fill="#fff" stroke="#000" strokeWidth="2">
                    <path d="M189 198L118 307L285 198" />
                    <path d="M1056 90L1154 49L1155 90" />
                    <path d="M190 647L336 670L256 647" />
                    <path d="M681 594L400 723L681 633" />
                </g>
                <g stroke="#fff" strokeWidth="3">
                    <path d="M191 197.500H282M1059 90.500H1154M197 646.500H256M681.500 596V631" />
                </g>
            </svg>
        </div>
    );
};

export default App;
